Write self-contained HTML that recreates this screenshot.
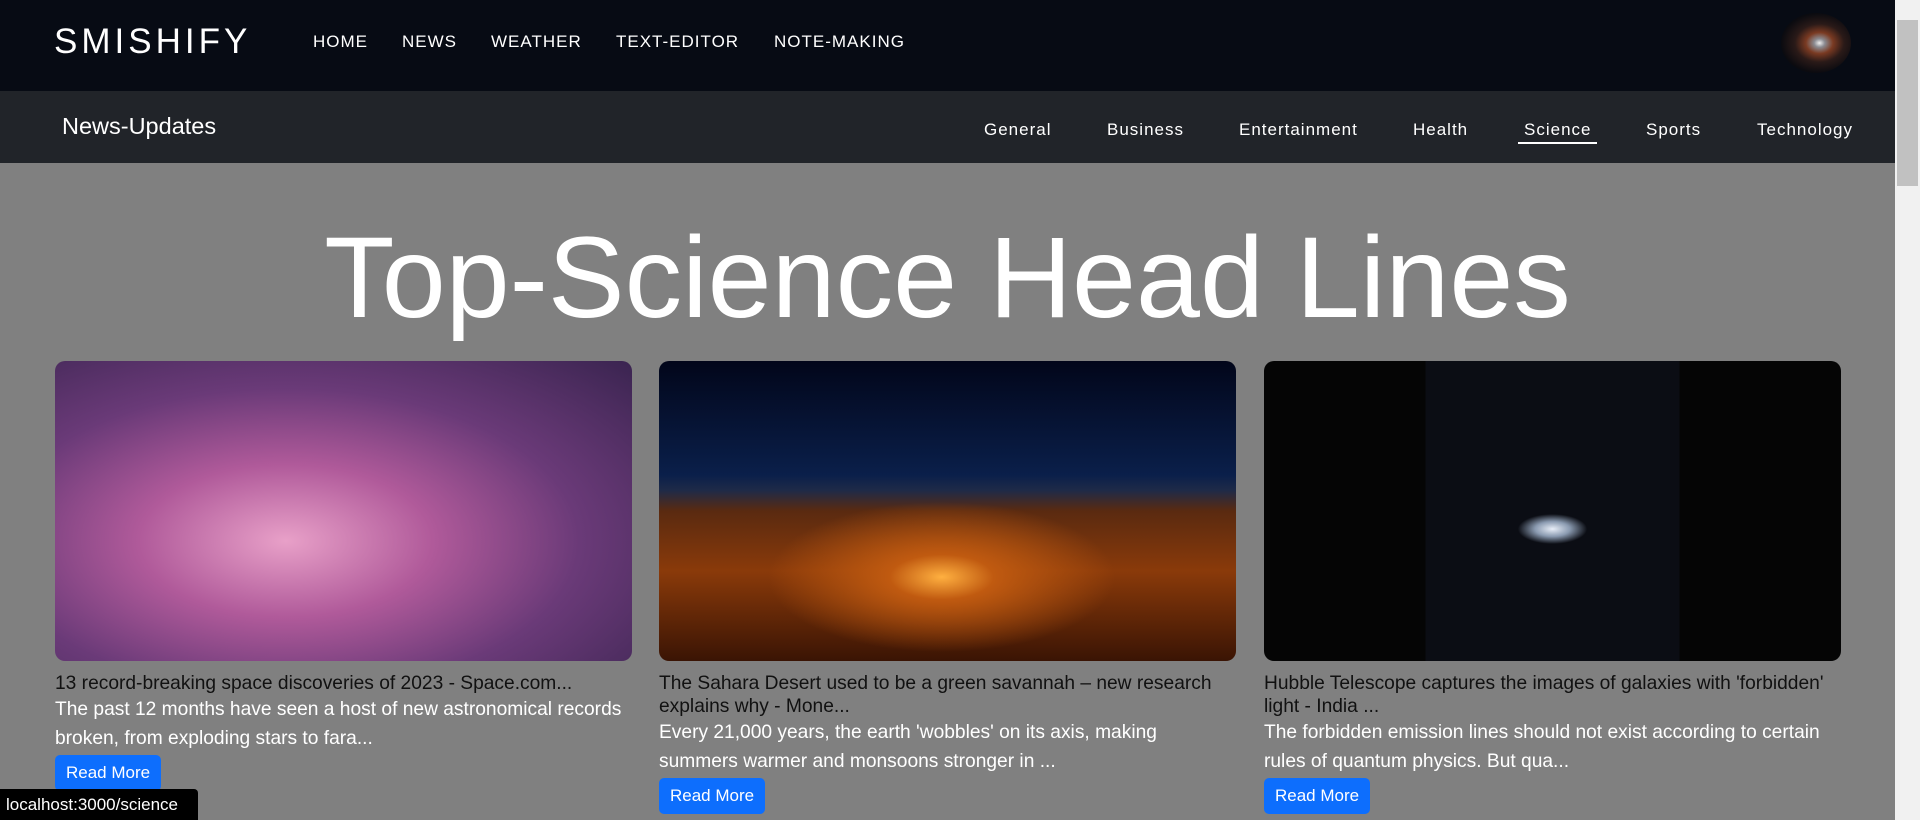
<!DOCTYPE html>
<html><head><meta charset="utf-8"><style>
*{box-sizing:border-box;margin:0;padding:0}
body{width:1920px;height:820px;overflow:hidden;background:#808080;font-family:"Liberation Sans",Arial,sans-serif;position:relative}
.top{position:absolute;left:0;top:0;width:1895px;height:91px;background:#070b14}
.logo{position:absolute;left:54px;top:22px;color:#fff;font-size:35px;letter-spacing:4px}
.nav a{position:absolute;top:32px;color:#fff;font-size:17px;letter-spacing:1px;text-decoration:none}
.av{position:absolute;left:1781px;top:13px;width:70px;height:60px;border-radius:50%;background:radial-gradient(ellipse at 55% 50%,#eee 0,#8a8a90 10%,#7a3a22 25%,#2a1a18 45%,#0b0b10 70%)}
.sub{position:absolute;left:0;top:91px;width:1895px;height:72px;background:#212429}
.nu{position:absolute;left:62px;top:22px;color:#fff;font-size:23.5px}
.cat a{position:absolute;top:29px;color:#fff;font-size:17px;letter-spacing:1px;text-decoration:none}
.ul{position:absolute;left:1518px;top:51px;width:79px;height:2px;background:#fff}
h1{position:absolute;left:0;width:1895px;text-align:center;top:215px;font-weight:normal;color:#fff;font-size:115px;line-height:1.1}
.card{position:absolute;top:361px;width:577px}
.img{height:300px;border-radius:10px}
.t{margin-top:11px;font-size:19.2px;line-height:23px;color:#111}
.b{font-size:19.2px;line-height:29px;color:#fff}
.btn{display:inline-block;margin-top:2px;background:#0d6efd;color:#fff;font-size:17px;padding:0 11px;height:36px;line-height:36px;border-radius:5px}
.sb{position:absolute;right:0;top:0;width:25px;height:820px;background:#f1f1f1}
.th{position:absolute;left:2px;top:20px;width:21px;height:166px;background:#c1c1c1}
.tip{position:absolute;left:0;top:789px;width:198px;height:31px;background:#000;color:#fff;font-size:17px;line-height:31px;padding-left:6px;border-top-right-radius:4px}
</style></head><body>
<div class="top"><div class="logo">SMISHIFY</div>
<div class="nav"><a style="left:313px">HOME</a><a style="left:402px">NEWS</a><a style="left:491px">WEATHER</a><a style="left:616px">TEXT-EDITOR</a><a style="left:774px">NOTE-MAKING</a></div>
<div class="av"></div></div>
<div class="sub"><div class="nu">News-Updates</div>
<div class="cat"><a style="left:984px">General</a><a style="left:1107px">Business</a><a style="left:1239px">Entertainment</a><a style="left:1413px">Health</a><a style="left:1524px">Science</a><a style="left:1646px">Sports</a><a style="left:1757px">Technology</a></div>
<div class="ul"></div></div>
<h1>Top-Science Head Lines</h1>
<div class="card" style="left:55px"><div class="img" style="background:radial-gradient(ellipse at 40% 60%,#e8a0c8 0,#b05a9a 30%,#6a3a78 60%,#3a2450 100%)"></div>
<div class="t">13 record-breaking space discoveries of 2023 - Space.com...</div>
<div class="b">The past 12 months have seen a host of new astronomical records broken, from exploding stars to fara...</div>
<span class="btn">Read More</span></div>
<div class="card" style="left:659px"><div class="img" style="background:radial-gradient(ellipse 30% 25% at 49% 72%,#ffb040 0,#c05a10 30%,transparent 100%),linear-gradient(#02061a 0,#0a1f4a 38%,#1e2a48 43%,#5a2a10 50%,#8a3a0a 70%,#3a1404 100%)"></div>
<div class="t">The Sahara Desert used to be a green savannah – new research explains why - Mone...</div>
<div class="b">Every 21,000 years, the earth 'wobbles' on its axis, making summers warmer and monsoons stronger in ...</div>
<span class="btn">Read More</span></div>
<div class="card" style="left:1264px"><div class="img" style="background:radial-gradient(ellipse 6% 5% at 50% 56%,#e8eef8 0,#8a9ab0 50%,transparent 100%),linear-gradient(90deg,#050505 0,#050505 28%,#0b0d14 28%,#0b0d14 72%,#050505 72%)"></div>
<div class="t">Hubble Telescope captures the images of galaxies with 'forbidden' light - India ...</div>
<div class="b">The forbidden emission lines should not exist according to certain rules of quantum physics. But qua...</div>
<span class="btn">Read More</span></div>
<div class="sb"><div class="th"></div></div>
<div class="tip">localhost:3000/science</div>
</body></html>
